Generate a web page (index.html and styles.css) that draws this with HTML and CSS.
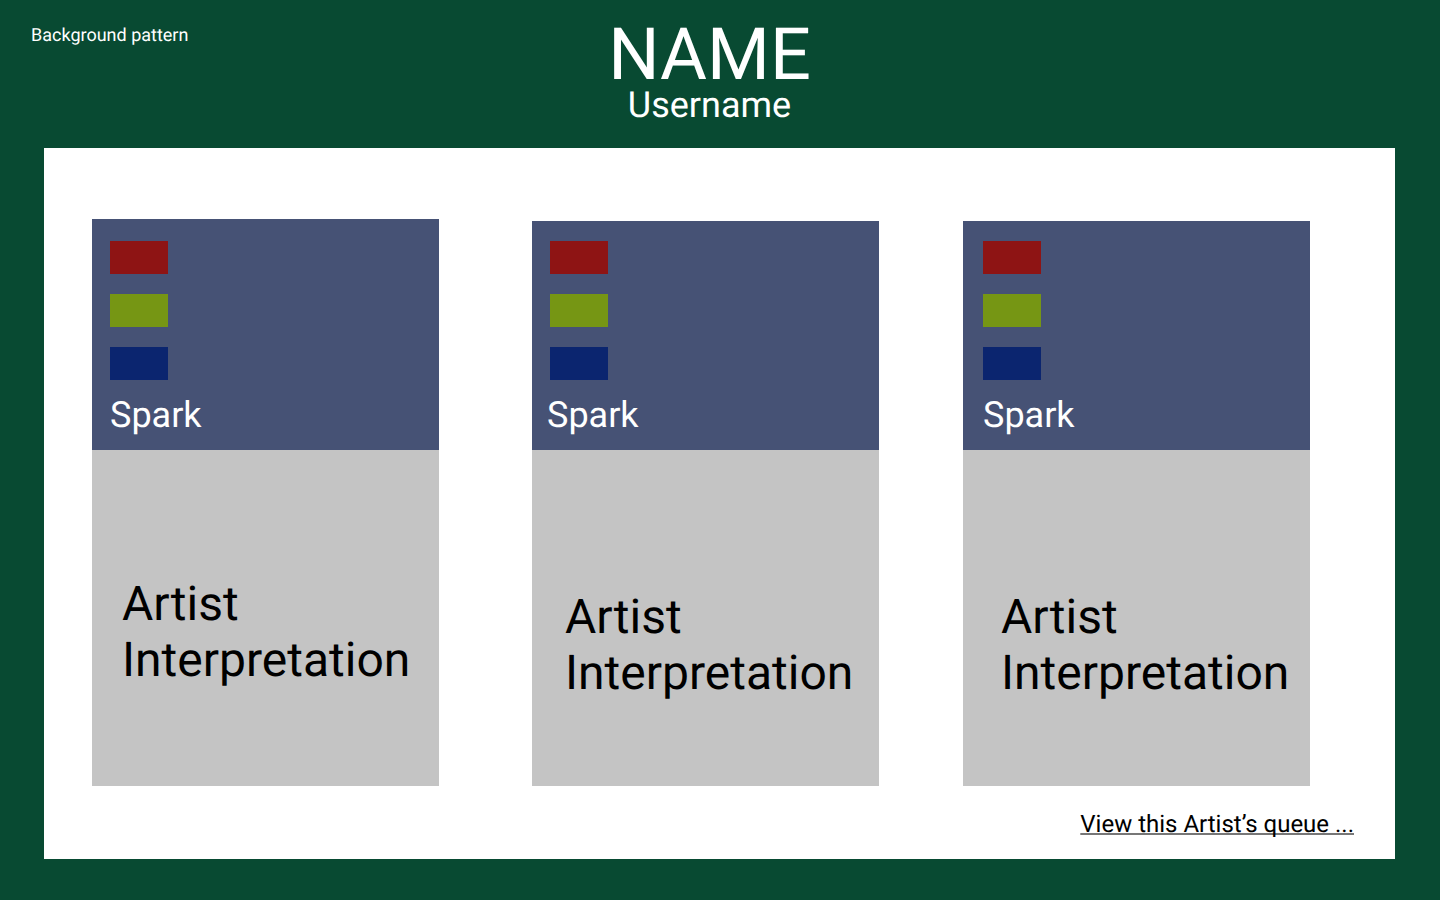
FILE: index.html
```html
<!DOCTYPE html>
<html lang="en">
<head>
<meta charset="utf-8">
<title>Artist profile</title>
<link rel="stylesheet" href="styles.css">
</head>
<body>
<header class="header">
  <p class="pattern-note">Background pattern</p>
  <div class="identity">
    <h1 class="name">NAME</h1>
    <p class="username">Username</p>
  </div>
</header>
<main class="panel">
  <div class="cards">
    <article class="card card-first">
      <div class="spark">
        <span class="swatch red"></span>
        <span class="swatch green"></span>
        <span class="swatch blue"></span>
        <h2 class="spark-title">Spark</h2>
      </div>
      <p class="interpretation">Artist Interpretation</p>
    </article>
    <article class="card card-second">
      <div class="spark">
        <span class="swatch red"></span>
        <span class="swatch green"></span>
        <span class="swatch blue"></span>
        <h2 class="spark-title">Spark</h2>
      </div>
      <p class="interpretation">Artist Interpretation</p>
    </article>
    <article class="card card-third">
      <div class="spark">
        <span class="swatch red"></span>
        <span class="swatch green"></span>
        <span class="swatch blue"></span>
        <h2 class="spark-title">Spark</h2>
      </div>
      <p class="interpretation">Artist Interpretation</p>
    </article>
  </div>
  <a class="queue-link" href="#queue">View this Artist’s queue ...</a>
</main>
</body>
</html>
```
FILE: styles.css
```css
* {
  box-sizing: border-box;
}

body {
  margin: 0;
  min-height: 100vh;
  padding: 0 45px 41px 44px;
  display: flex;
  flex-direction: column;
  background: #084a32;
  color: #fff;
  font-family: Roboto, sans-serif;
  text-rendering: geometricPrecision;
}

h1, h2, p {
  margin: 0;
  font-weight: 400;
}

.header {
  display: grid;
  grid-template-columns: 1fr auto 1fr;
  margin-left: -13px;
  padding: 19px 0 29px;
}

.pattern-note {
  padding-top: 6px;
  font-size: 18px;
  line-height: 21px;
}

.identity {
  margin-right: 7px;
  text-align: center;
}

.name {
  font-size: 72px;
  line-height: 72px;
}

.username {
  font-size: 36px;
  line-height: 28px;
}

.panel {
  flex: 1;
  display: flex;
  flex-direction: column;
  padding: 71px 41px 21px 48px;
  background: #fff;
  color: #000;
}

.cards {
  flex: 1;
  display: flex;
  padding-right: 44px;
}

.card {
  flex: 1;
  display: flex;
  flex-direction: column;
}

.card-second {
  margin: 2px 84px 0 93px;
}

.card-third {
  margin-top: 2px;
}

.spark {
  display: flex;
  flex-direction: column;
  gap: 20px;
  padding: 20px 18px 14px;
  background: #465275;
  color: #fff;
}

.card-first .spark {
  padding-top: 22px;
}

.card-third .spark {
  padding-left: 20px;
}

.swatch {
  width: 58px;
  height: 33px;
}

.red {
  background: #8e1414;
}

.green {
  background: #769614;
}

.blue {
  background: #0b256f;
}

.spark-title {
  margin-top: -6px;
  font-size: 36px;
  line-height: 42px;
}

.card-second .spark-title {
  margin-left: -3px;
}

.interpretation {
  flex: 1;
  padding: 139px 18px 0 33px;
  background: #c4c4c4;
  font-size: 48px;
  line-height: 56px;
}

.card-first .interpretation {
  padding: 126px 18px 0 30px;
}

.card-third .interpretation {
  padding-left: 38px;
}

.queue-link {
  align-self: flex-end;
  margin-top: 24px;
  color: #000;
  font-size: 24px;
  line-height: 28px;
  text-decoration-color: #777;
  text-decoration-thickness: 2px;
  text-decoration-skip-ink: none;
}
```
